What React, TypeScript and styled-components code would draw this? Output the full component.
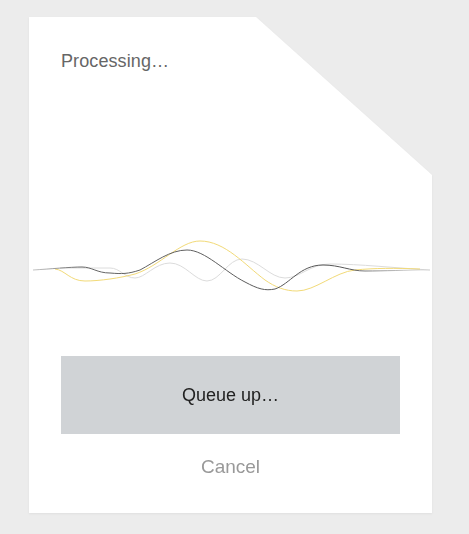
import React, { FC } from 'react'
import styled, { createGlobalStyle } from 'styled-components'

const GlobalStyle = createGlobalStyle`
  html, body {
    margin: 0;
    padding: 0;
    background: #ececec;
    font-family: 'Liberation Sans', Arial, sans-serif;
  }
`

const waves = [
  {
    key: 'light',
    color: '#dcdcdc',
    d: 'M60,268 C75,268 95,268 110,268 C120,268 125,278 135,278 C145,278 155,263 170,263 C185,263 195,281 207,281 C220,281 228,259 242,259 C258,259 270,278 285,278 C300,278 310,264 330,264 C360,264 395,268 430,270',
  },
  {
    key: 'yellow',
    color: '#f2da78',
    d: 'M55,269 C65,270 70,281 85,281 C100,281 120,278 135,274 C160,266 180,241 200,241 C225,241 245,265 265,280 C275,287 285,291 297,291 C315,291 335,272 355,270 C375,268 395,268 420,269',
  },
  {
    key: 'dark',
    color: 'url(#darkFade)',
    d: 'M33,270 C50,269 70,267 82,267 C92,267 97,273 110,273 C122,274 128,274 140,270 C155,262 170,250 187,250 C205,250 225,272 245,282 C258,289 265,291 275,289 C290,284 300,265 323,265 C340,265 350,271 365,271 C385,271 405,270 430,270',
  },
]

export const App: FC = () => {
  return (
    <Page>
      <GlobalStyle />
      <Shadow>
        <Card>
          <Title>Processing…</Title>
          <Wave viewBox="29 230 403 80" width={403} height={80}>
            <defs>
              <linearGradient id="darkFade" x1="33" y1="0" x2="430" y2="0" gradientUnits="userSpaceOnUse">
                <stop offset="0" stopColor="#888" stopOpacity="0.5" />
                <stop offset="0.12" stopColor="#666" />
                <stop offset="0.8" stopColor="#555" />
                <stop offset="1" stopColor="#999" stopOpacity="0.2" />
              </linearGradient>
            </defs>
            {waves.map((w) => (
              <path key={w.key} d={w.d} fill="none" stroke={w.color} strokeWidth={1} />
            ))}
          </Wave>
          <QueueButton>Queue up…</QueueButton>
          <CancelLink>Cancel</CancelLink>
        </Card>
      </Shadow>
    </Page>
  )
}

export default App

const Page = styled.div`
  padding: 17px 0 0 29px;
  min-height: 534px;
  box-sizing: border-box;
`

const Shadow = styled.div`
  width: 403px;
  filter: drop-shadow(0 1px 1px rgba(0, 0, 0, 0.05));
`

const Card = styled.div`
  width: 403px;
  height: 496px;
  box-sizing: border-box;
  background: #fff;
  padding: 33px 32px 0;
  display: flex;
  flex-direction: column;
  clip-path: polygon(0 0, 227px 0, 100% 158px, 100% 100%, 0 100%);
`

const Title = styled.div`
  font-size: 18px;
  line-height: 22px;
  color: #666;
  letter-spacing: 0.1px;
`

const Wave = styled.svg`
  display: block;
  margin: 158px -32px 0;
`

const QueueButton = styled.button`
  margin-top: 46px;
  height: 78px;
  width: 100%;
  border: none;
  background: #d0d3d6;
  color: #222;
  font-family: 'Liberation Sans', Arial, sans-serif;
  font-size: 18px;
  cursor: pointer;
`

const CancelLink = styled.div`
  margin-top: 22px;
  text-align: center;
  font-size: 19px;
  line-height: 22px;
  color: #999;
  cursor: pointer;
`
